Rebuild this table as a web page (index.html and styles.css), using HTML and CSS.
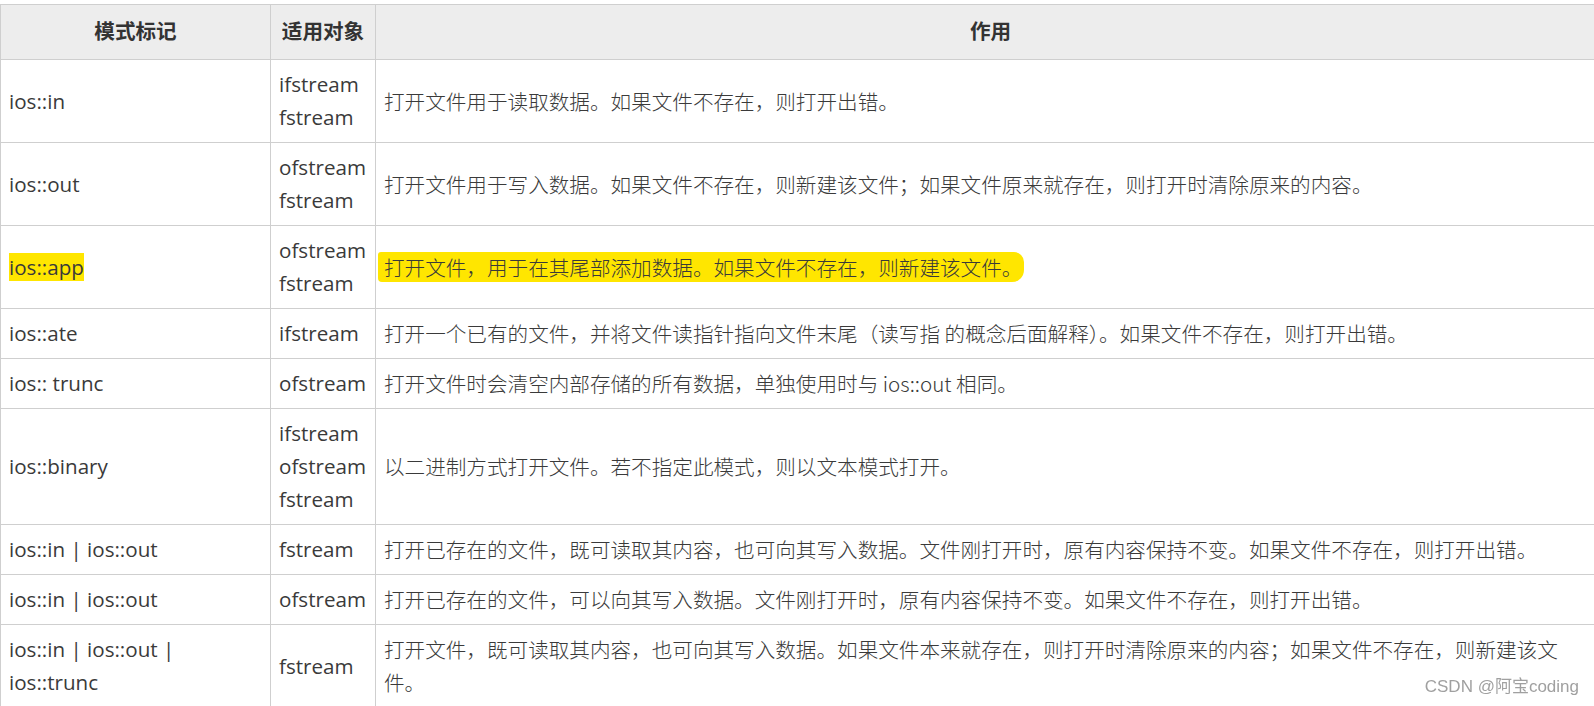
FILE: index.html
```html
<!DOCTYPE html>
<html lang="zh-CN">
<head>
  <meta charset="UTF-8" />
  <title>文件打开模式</title>
  <link rel="stylesheet" href="styles.css">
</head>
<body>

  <!-- 模式表 -->
  <table class="mode-table">
    <colgroup>
      <col class="col-flag">
      <col class="col-target">
      <col class="col-desc">
    </colgroup>
    <thead>
      <tr>
        <th>模式标记</th>
        <th>适用对象</th>
        <th>作用</th>
      </tr>
    </thead>
    <tbody>
      <tr>
        <td>ios::in</td>
        <td>ifstream<br>fstream</td>
        <td>打开文件用于读取数据。如果文件不存在，则打开出错。</td>
      </tr>
      <tr>
        <td>ios::out</td>
        <td>ofstream<br>fstream</td>
        <td>打开文件用于写入数据。如果文件不存在，则新建该文件；如果文件原来就存在，则打开时清除原来的内容。</td>
      </tr>
      <tr>
        <td><span class="mark">ios::app</span></td>
        <td>ofstream<br>fstream</td>
        <td><span class="mark mark-stroke">打开文件，用于在其尾部添加数据。如果文件不存在，则新建该文件。</span></td>
      </tr>
      <tr>
        <td>ios::ate</td>
        <td>ifstream</td>
        <td>打开一个已有的文件，并将文件读指针指向文件末尾（读写指 的概念后面解释）。如果文件不存在，则打开出错。</td>
      </tr>
      <tr>
        <td>ios:: trunc</td>
        <td>ofstream</td>
        <td>打开文件时会清空内部存储的所有数据，单独使用时与 ios::out 相同。</td>
      </tr>
      <tr>
        <td>ios::binary</td>
        <td>ifstream<br>ofstream<br>fstream</td>
        <td>以二进制方式打开文件。若不指定此模式，则以文本模式打开。</td>
      </tr>
      <tr>
        <td>ios::in | ios::out</td>
        <td>fstream</td>
        <td>打开已存在的文件，既可读取其内容，也可向其写入数据。文件刚打开时，原有内容保持不变。如果文件不存在，则打开出错。</td>
      </tr>
      <tr>
        <td>ios::in | ios::out</td>
        <td>ofstream</td>
        <td>打开已存在的文件，可以向其写入数据。文件刚打开时，原有内容保持不变。如果文件不存在，则打开出错。</td>
      </tr>
      <tr>
        <td>ios::in | ios::out |<br>ios::trunc</td>
        <td>fstream</td>
        <td>打开文件，既可读取其内容，也可向其写入数据。如果文件本来就存在，则打开时清除原来的内容；如果文件不存在，则新建该文件。</td>
      </tr>
    </tbody>
  </table>

  <div class="watermark">CSDN @阿宝coding</div>

</body>
</html>
```

FILE: styles.css
```css
* {
  box-sizing: border-box;
}

html, body {
  height: 100%;
}

body {
  margin: 0;
  padding-top: 4px;
  overflow: hidden;
  background: #fff;
  font-family: "Open Sans", "Noto Sans CJK SC", sans-serif;
  color: #3a3a3a;
}

.mode-table {
  width: 1606px;
  table-layout: fixed;
  border-collapse: collapse;
  font-size: 20.6px;
}

.col-flag {
  width: 270px;
}

.col-target {
  width: 105px;
}

.mode-table th,
.mode-table td {
  border: 1px solid #cfcfcf;
  padding: 8px;
  line-height: 33px;
  vertical-align: middle;
  text-align: left;
}

.mode-table th {
  background: #ededed;
  color: #333;
  font-weight: bold;
  text-align: center;
  font-size: 20.6px;
  padding: 10px 8px 11px;
}

.mode-table td:last-child {
  font-family: "Noto Sans CJK SC", sans-serif;
  font-weight: 300;
}

.mark {
  background: #ffe600;
}

.mark-stroke {
  margin-left: -6px;
  padding: 0 2px 0 6px;
  border-radius: 3px 10px 12px 4px;
}

.watermark {
  position: fixed;
  right: 15px;
  bottom: 9px;
  font-family: "Liberation Sans", "Noto Sans CJK SC", sans-serif;
  font-size: 17px;
  color: #a0a0a0;
}
```
